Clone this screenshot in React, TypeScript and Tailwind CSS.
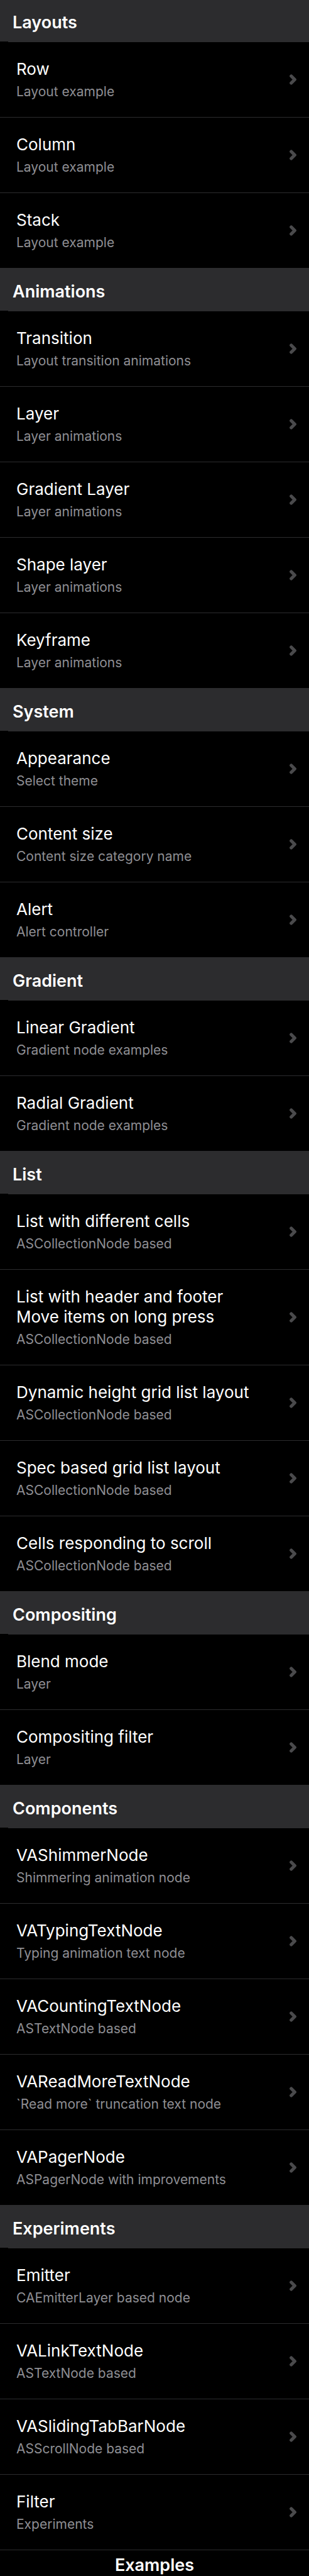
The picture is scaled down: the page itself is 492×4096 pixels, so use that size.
type Item = { title: string; subtitle: string };
type Section = { name: string; items: Item[] };

const sections: Section[] = [
  {
    name: "Layouts",
    items: [
      { title: "Row", subtitle: "Layout example" },
      { title: "Column", subtitle: "Layout example" },
      { title: "Stack", subtitle: "Layout example" },
    ],
  },
  {
    name: "Animations",
    items: [
      { title: "Transition", subtitle: "Layout transition animations" },
      { title: "Layer", subtitle: "Layer animations" },
      { title: "Gradient Layer", subtitle: "Layer animations" },
      { title: "Shape layer", subtitle: "Layer animations" },
      { title: "Keyframe", subtitle: "Layer animations" },
    ],
  },
  {
    name: "System",
    items: [
      { title: "Appearance", subtitle: "Select theme" },
      { title: "Content size", subtitle: "Content size category name" },
      { title: "Alert", subtitle: "Alert controller" },
    ],
  },
  {
    name: "Gradient",
    items: [
      { title: "Linear Gradient", subtitle: "Gradient node examples" },
      { title: "Radial Gradient", subtitle: "Gradient node examples" },
    ],
  },
  {
    name: "List",
    items: [
      { title: "List with different cells", subtitle: "ASCollectionNode based" },
      {
        title: "List with header and footer\nMove items on long press",
        subtitle: "ASCollectionNode based",
      },
      { title: "Dynamic height grid list layout", subtitle: "ASCollectionNode based" },
      { title: "Spec based grid list layout", subtitle: "ASCollectionNode based" },
      { title: "Cells responding to scroll", subtitle: "ASCollectionNode based" },
    ],
  },
  {
    name: "Compositing",
    items: [
      { title: "Blend mode", subtitle: "Layer" },
      { title: "Compositing filter", subtitle: "Layer" },
    ],
  },
  {
    name: "Components",
    items: [
      { title: "VAShimmerNode", subtitle: "Shimmering animation node" },
      { title: "VATypingTextNode", subtitle: "Typing animation text node" },
      { title: "VACountingTextNode", subtitle: "ASTextNode based" },
      { title: "VAReadMoreTextNode", subtitle: "`Read more` truncation text node" },
      { title: "VAPagerNode", subtitle: "ASPagerNode with improvements" },
    ],
  },
  {
    name: "Experiments",
    items: [
      { title: "Emitter", subtitle: "CAEmitterLayer based node" },
      { title: "VALinkTextNode", subtitle: "ASTextNode based" },
      { title: "VASlidingTabBarNode", subtitle: "ASScrollNode based" },
      { title: "Filter", subtitle: "Experiments" },
    ],
  },
];

function Chevron() {
  return (
    <svg className="h-[17px] w-[11px] shrink-0" viewBox="0 0 11 17" fill="none" aria-hidden="true">
      <path
        d="M2.75 3 L8.25 8.5 L2.75 14"
        stroke="#4a4a4c"
        strokeWidth="5.2"
        strokeLinecap="round"
        strokeLinejoin="round"
      />
    </svg>
  );
}

function Row({ item }: { item: Item }) {
  return (
    <li className="border-b border-[#2c2c2e]">
      <a href="#" className="flex items-center justify-between pt-[27px] pr-5 pb-7 pl-[26px]">
        <span className="flex flex-col gap-2">
          <span className="whitespace-pre-line text-[26px] leading-8 text-white">{item.title}</span>
          <span className="text-[21px] leading-6 text-[#8e8e93]">{item.subtitle}</span>
        </span>
        <Chevron />
      </a>
    </li>
  );
}

export default function App() {
  return (
    <div className="flex min-h-screen flex-col bg-black font-['Inter',sans-serif]">
      <main>
        {sections.map((section) => (
          <section key={section.name} className="group">
            <h2 className="bg-[#2c2c2e] px-5 pt-[21px] pb-[14px] text-[27px] leading-8 font-semibold text-white group-first:pt-5">
              {section.name}
            </h2>
            <div className="ml-[13px] h-px bg-[#2c2c2e]" />
            <ul>
              {section.items.map((item) => (
                <Row key={item.title} item={item} />
              ))}
            </ul>
          </section>
        ))}
      </main>
      <footer className="pt-2 text-center text-[27px] leading-8 font-semibold text-white">
        <h1>Examples</h1>
      </footer>
    </div>
  );
}
